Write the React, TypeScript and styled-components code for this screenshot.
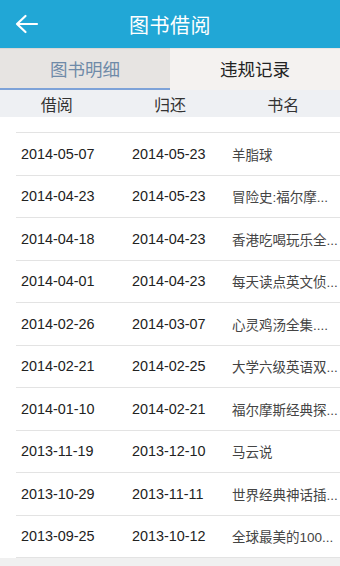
import React, { useState } from "react";
import styled, { createGlobalStyle } from "styled-components";

const Global = createGlobalStyle`
  html, body { margin: 0; padding: 0; }
  body { font-family: "Liberation Sans", "Noto Sans CJK SC", sans-serif; background: #f0f0f0; }
`;

const Page = styled.div`
  width: 340px;
  height: 566px;
  display: flex;
  flex-direction: column;
  background: #f0f0f0;
  overflow: hidden;
`;

const TopBar = styled.div`
  height: 48px;
  background: #21a7d6;
  display: grid;
  grid-template-columns: 56px 1fr 56px;
  align-items: center;
`;

const BackButton = styled.div`
  display: flex;
  align-items: center;
  justify-content: center;
  height: 48px;
  padding-right: 2px;
`;

const Title = styled.div`
  color: #ffffff;
  font-size: 20px;
  text-align: center;
  font-family: "Noto Sans CJK SC", sans-serif;
  letter-spacing: 0.5px;
`;

const Tabs = styled.div`
  display: grid;
  grid-template-columns: 170px 170px;
  height: 42px;
`;

const Tab = styled.div<{ $active: boolean }>`
  display: flex;
  align-items: center;
  justify-content: center;
  box-sizing: border-box;
  background: ${(p) => (p.$active ? "#e7e4e2" : "#f4f2f0")};
  color: ${(p) => (p.$active ? "#6f8aa8" : "#222222")};
  border-bottom: 2px solid ${(p) => (p.$active ? "#7ea2d8" : "#f4f2f0")};
  border-top: 1px solid ${(p) => (p.$active ? "#d9d6d4" : "#e8e6e4")};
  font-size: 17.5px;
  font-family: "Noto Sans CJK SC", sans-serif;
  padding-bottom: 1px;
`;

const HeaderRow = styled.div`
  display: grid;
  grid-template-columns: 1fr 1fr 1fr;
  height: 27px;
  align-items: center;
  background: #eef0f3;
  color: #333333;
  font-size: 16px;
  font-family: "Noto Sans CJK SC", sans-serif;
`;

const HeaderCell = styled.div`
  text-align: center;
`;

const ListArea = styled.div`
  background: #ffffff;
  padding-top: 15px;
`;

const List = styled.div`
  margin-left: 16px;
  border-top: 1px solid #e3e3e3;
`;

const Row = styled.div`
  display: grid;
  grid-template-columns: 111px 100px 1fr;
  align-items: center;
  box-sizing: border-box;
  height: 42.5px;
  padding-left: 5px;
  border-bottom: 1px solid #e3e3e3;
  font-size: 14.4px;
  color: #222222;
`;

const DateCell = styled.div`
  font-family: "Liberation Sans", sans-serif;
`;

const NameCell = styled.div`
  color: #444444;
  font-size: 13.5px;
  font-family: "Liberation Sans", "Noto Sans CJK SC", sans-serif;
  white-space: nowrap;
`;

const rows: [string, string, string][] = [
  ["2014-05-07", "2014-05-23", "羊脂球"],
  ["2014-04-23", "2014-05-23", "冒险史:福尔摩..."],
  ["2014-04-18", "2014-04-23", "香港吃喝玩乐全..."],
  ["2014-04-01", "2014-04-23", "每天读点英文侦..."],
  ["2014-02-26", "2014-03-07", "心灵鸡汤全集...."],
  ["2014-02-21", "2014-02-25", "大学六级英语双..."],
  ["2014-01-10", "2014-02-21", "福尔摩斯经典探..."],
  ["2013-11-19", "2013-12-10", "马云说"],
  ["2013-10-29", "2013-11-11", "世界经典神话插..."],
  ["2013-09-25", "2013-10-12", "全球最美的100..."],
];

export default function App() {
  const [tab, setTab] = useState(0);
  return (
    <>
      <Global />
      <Page>
        <TopBar>
          <BackButton>
            <svg width="24" height="20" viewBox="0 0 24 20">
              <path
                d="M2 10 H22 M10.5 2 L2 10 L10.5 18"
                fill="none"
                stroke="#ffffff"
                strokeWidth="2.2"
                strokeLinecap="round"
                strokeLinejoin="round"
              />
            </svg>
          </BackButton>
          <Title>图书借阅</Title>
          <div />
        </TopBar>
        <Tabs>
          <Tab $active={tab === 0} onClick={() => setTab(0)}>图书明细</Tab>
          <Tab $active={tab === 1} onClick={() => setTab(1)}>违规记录</Tab>
        </Tabs>
        <HeaderRow>
          <HeaderCell>借阅</HeaderCell>
          <HeaderCell>归还</HeaderCell>
          <HeaderCell>书名</HeaderCell>
        </HeaderRow>
        <ListArea>
          <List>
            {rows.map((r, i) => (
              <Row key={i}>
                <DateCell>{r[0]}</DateCell>
                <DateCell>{r[1]}</DateCell>
                <NameCell>{r[2]}</NameCell>
              </Row>
            ))}
          </List>
        </ListArea>
      </Page>
    </>
  );
}
